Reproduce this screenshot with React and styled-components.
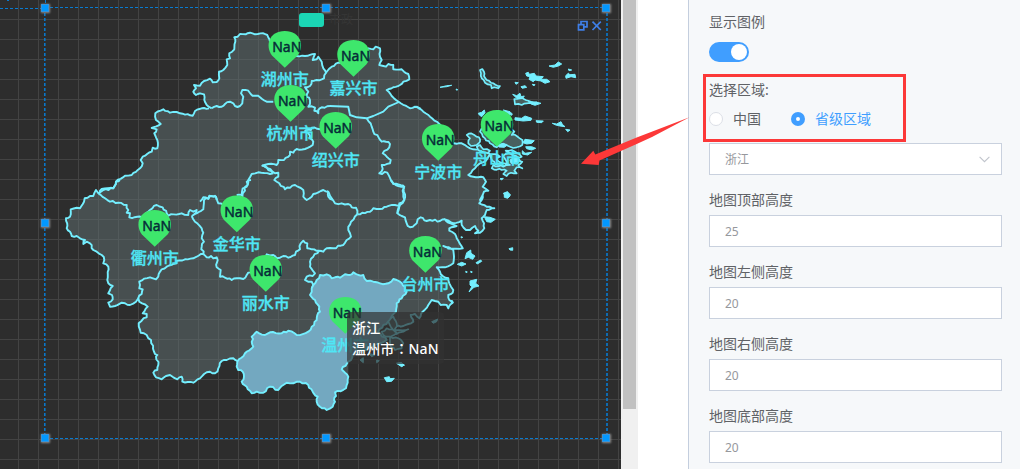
import React from "react";
import styled, { createGlobalStyle } from "styled-components";

const GlobalStyle = createGlobalStyle`
  * { box-sizing: border-box; }
  body {
    margin: 0;
    background: #fff;
    font-family: "Noto Sans", "Noto Sans CJK SC", sans-serif;
  }
`;

const Page = styled.div`
  position: relative;
  display: flex;
  width: 1020px;
  height: 469px;
  overflow: hidden;
  background: #fff;
`;

const Canvas = styled.main`
  position: relative;
  flex: 0 0 621px;
  overflow: hidden;
  background-color: #2d2d2d;
  background-image: linear-gradient(to right, #434343 1px, transparent 1px),
    linear-gradient(to bottom, #434343 1px, transparent 1px);
  background-size: 20px 20px;
  background-position: 18px 19px;
`;

const MapSvg = styled.svg`
  position: absolute;
  inset: 0;
  display: block;
`;

const Legend = styled.div`
  position: absolute;
  left: 299px;
  top: 13px;
  display: flex;
  align-items: center;
  gap: 5px;
  height: 14px;
  font-size: 12px;
  line-height: 14px;
  color: #353535;
`;

const Swatch = styled.span`
  width: 25px;
  height: 14px;
  border-radius: 3px;
  background: #1bd6b5;
`;

const Tooltip = styled.div`
  position: absolute;
  left: 347px;
  top: 312px;
  width: 97px;
  height: 52px;
  padding: 5px;
  border-radius: 4px;
  background: rgba(50, 50, 50, 0.7);
  color: #fff;
  font-size: 14px;
  font-weight: 500;
  letter-spacing: 0.15px;
  line-height: 21px;
  white-space: nowrap;
`;

const Colon = styled.span`
  font-family: "Noto Sans CJK TC", sans-serif;
`;

const Handle = styled.i`
  position: absolute;
  left: ${(p) => p.$x - 4}px;
  top: ${(p) => p.$y - 4}px;
  width: 8px;
  height: 8px;
  border: 0.5px solid #3a93d8;
  background: #0298ff;
  box-shadow: 0 0 2px 0.5px #8b8b8b;
`;

const Tools = styled.div`
  position: absolute;
  left: 577px;
  top: 15px;
`;

const ScrollTrack = styled.div`
  flex: 0 0 17px;
  padding: 0 2px;
  background: #f0f0f0;
`;

const ScrollThumb = styled.div`
  height: 409px;
  background: #c1c1c1;
`;

const Gutter = styled.div`
  flex: 0 0 50px;
`;

const Panel = styled.aside`
  flex: 1;
  display: flex;
  flex-direction: column;
  padding: 8px 18px 0 20px;
  border-left: 1px solid #c4cede;
  background: #f6f8fa;
`;

const Label = styled.div`
  flex: 0 0 28px;
  font-size: 14px;
  line-height: 28px;
  color: #606266;
`;

const Switch = styled.div`
  display: flex;
  justify-content: flex-end;
  width: 40px;
  height: 20px;
  margin: 6px 0 14px;
  padding: 2px;
  border-radius: 10px;
  background: #409eff;
`;

const Knob = styled.span`
  width: 16px;
  height: 16px;
  border-radius: 50%;
  background: #fff;
`;

const RadioRow = styled.div`
  display: flex;
  flex: 0 0 30px;
  gap: 30px;
  margin-bottom: 9px;
  align-items: center;
`;

const Radio = styled.label`
  display: flex;
  align-items: center;
  gap: 10px;
  font-size: 14px;
  line-height: 28px;
  color: ${(p) => (p.$on ? "#409eff" : "#606266")};
`;

const Dot = styled.span`
  width: 14px;
  height: 14px;
  border-radius: 50%;
  background: #fff;
  border: ${(p) => (p.$on ? "5px solid #409eff" : "1px solid #dcdfe6")};
`;

const Field = styled.div`
  display: flex;
  flex: 0 0 32px;
  align-items: center;
  justify-content: space-between;
  margin-bottom: 11px;
  padding: 0 11px 0 15px;
  border: 1px solid #c9d1de;
  background: #fff;
  color: #96989d;
  font-size: 12px;
`;

const FieldLabel = styled(Label)`
  flex: 0 0 29px;
`;

const Highlight = styled.div`
  position: absolute;
  left: 703px;
  top: 74px;
  width: 203px;
  height: 68px;
  border: 3px solid #fc3838;
`;

const Arrow = styled.svg`
  position: absolute;
  left: 580px;
  top: 115px;
`;

const hash = (n) => {
  const s = Math.sin(n * 12.9898) * 43758.5453;
  return s - Math.floor(s) - 0.5;
};

// Turns "x,y x,y" survey points (three units to a pixel) into pixel coordinates,
// breaking long segments into small uneven steps so that they read as natural edges.
const run = (ox, oy, pts, rough = 2) => {
  const list = pts
    .trim()
    .split(/\s+/)
    .map((p) => {
      const [x, y] = p.split(",").map(Number);
      return [ox + x / 3, oy + y / 3];
    });
  const out = [list[0]];
  for (let i = 1; i < list.length; i++) {
    const [x0, y0] = list[i - 1];
    const [x1, y1] = list[i];
    const len = Math.hypot(x1 - x0, y1 - y0);
    const n = rough ? Math.min(5, Math.round(len / 2.8)) : 1;
    for (let k = 1; k < n; k++) {
      const d = (hash(x0 + y0 * 3 + k * 7.3 + x1) * rough) / len;
      out.push([x0 + ((x1 - x0) * k) / n - (y1 - y0) * d, y0 + ((y1 - y0) * k) / n + (x1 - x0) * d]);
    }
    out.push([x1, y1]);
  }
  return out.map(([x, y]) => `${x.toFixed(1)} ${y.toFixed(1)}`).join("L");
};

const lakeside = run(180, 0, `95,325 80,315 73,300 72,283 60,280 48,285 40,275 48,265 42,255 60,257 72,243 90,236 98,247
110,246 118,235 117,215 130,210 142,195 140,178 150,175 148,160 163,148 166,125 163,112 173,110 180,102 197,103 210,98
225,103 250,100 262,105 270,125 290,165 350,168 375,168 405,162 398,180 410,178 415,170 425,185 430,205 438,218 455,200
475,188 490,190 540,165 565,145 580,148 587,140 600,145 600,170 605,180 598,195 610,198 618,200 625,192 640,195 640,208
665,208 672,215 685,222 688,238 670,245 660,255 640,262 620,270 635,288 657,306 690,325 705,320 720,325`, 1);
const bay = run(380, 0, `110,320 130,335 150,350 178,372 200,400 222,430 245,430 262,440 280,448 300,447 315,455 330,462
318,482 300,490 285,505 265,525 280,530 310,532 318,545 308,560 318,567 325,572 312,575 308,585 300,600`, 1);
const southCoast = run(390, 170, `278,75 275,90 268,100 290,110 313,115 290,120 285,135 275,145 282,160 283,175 270,188
255,190 265,182 255,168 240,180 228,180 215,165 215,152 190,160 165,148 175,158 200,168 178,175 178,182 195,192 200,205
218,235 190,236 160,228 190,240 192,260 190,280 165,292 140,292 150,305 158,318 175,325 178,340 183,350 190,360 188,368
175,375 178,390 188,398 175,415 170,405 152,405 145,395 125,390 115,405 98,425 88,445 75,432 62,435 70,455 40,468 10,468`, 1.4);
const wenzhou = run(220, 180, `275,325 280,315 290,300 300,285 320,283 335,295 345,292 360,293 375,283 390,285 400,277 415,285
430,285 440,303 460,305 480,310 505,310 520,297 530,300 540,305 555,320 560,335 545,355 530,370 528,395 510,420
490,435 475,455 500,480 475,490 430,510 405,520 385,545 365,568 375,578 385,590 378,625 345,637 348,648 342,660 345,665 338,680
320,690 300,680 290,665 293,650 278,635 265,615 240,605 220,610 200,608 190,615 175,630 150,620 130,638 110,635 95,640
80,620 65,605 72,590 68,575 55,570 50,560 52,545 75,520 100,500 95,470 110,455 135,465 150,457 185,460 205,452 230,465
265,455 275,440 290,420 292,405 300,395 298,380 285,360 270,345 275,325`);
const southWest = run(50, 180, `562,543 550,535 530,540 515,543 505,565 495,580 480,575 470,577 450,595 430,608 397,605
395,590 388,592 382,598 370,592 360,585 348,588 335,598 318,592 310,578 322,570 325,555 318,530 322,525 312,515 303,480 290,465
272,458 266,430 275,422 290,412 290,402 278,400 293,380 268,365 265,355 258,365 240,375 225,370 215,368 195,378 180,380
175,368 188,358 186,345 175,340 188,318 175,310 172,300 175,260 160,250 163,240 155,225 140,215 130,210 120,190 110,185 100,192
105,180 90,175 80,168 65,168 60,155 50,145 48,115 60,110 62,88 90,85 102,65 104,55 120,48 130,48 138,30 145,40 150,37`);
const northWest = run(0, 0, `300,572 305,567 340,565 348,545 375,527 395,525 420,505 428,490 422,480 428,470 455,455 458,443 472,445
472,420 463,400 470,388 455,384 482,372 468,360 466,340 490,328 510,338 530,336 540,340 578,347 585,333 605,325 627,325`, 1.4);

const province = `M${lakeside}L${bay}L${southCoast}L${run(220, 180, "490,435 475,455 500,480 430,510 385,545 365,568 385,590", 0)}L${run(220, 180, "385,520 52,545", 0)}L${southWest}L${northWest}Z`;
const outline = [
  `M${lakeside}L${bay}L${southCoast}`,
  `M${southWest}L${northWest}`,
];

const borders = [
  [180, 0, "95,325 110,318 125,320 135,312 150,305 160,310 165,318 180,318 187,310 190,290 183,280 187,270 205,272 212,282 225,287 240,292 260,305 280,305"],
  [180, 0, "438,218 432,235 410,240 395,243 390,258 375,262 385,275 380,290 390,300 390,312 385,320 405,323 403,332 415,340 415,330 425,322 450,318"],
  [180, 0, "450,318 505,320 510,345 530,352 560,355 580,348 610,335 625,320 657,306", 0],
  [180, 0, "420,388 395,383 393,390 375,393 385,400 390,415 400,425 398,435 375,447 350,447 340,458 330,455 330,465 312,480 295,480 290,495 265,492 247,497 260,502 265,510 280,520"],
  [180, 0, "280,520 270,522 235,517 215,522 205,540 203,555 193,563 195,572 188,580 186,600"],
  [180, 0, "60,605 70,592 85,597 90,588 108,590 110,600"],
  [180, 0, "247,495 285,520 295,518 295,530 283,540 298,550 315,568 345,555 370,570 370,590 380,600 395,590 400,582 415,577 430,570 445,575 445,590 458,600"],
  [220, 180, "320,33 335,55 345,70 365,70 385,72 395,82 408,83 412,103"],
  [180, 0, "560,355 575,380 580,395 605,425 618,425 630,432 628,442 608,460 620,470 632,480 630,490 605,495 608,507 598,520 622,518 640,550 655,558 673,560 673,600"],
  [220, 180, "513,0 520,12 550,17 550,40 553,60 540,75 535,85 532,100"],
  [390, 170, "42,90 28,100 28,110 22,130 35,138 45,142 50,160 60,172 80,160 83,148 92,142 110,153 120,150 150,153 165,148"],
  [220, 180, "412,103 450,95 460,85 480,87 500,80 525,75 540,75"],
  [220, 180, "297,212 310,215 320,205 340,205 370,195 380,180 393,170 390,160 385,150 393,125 412,103"],
  [220, 180, "297,212 280,230 270,245 270,260 285,280 278,288 260,290 255,300 275,305 280,315 275,325"],
  [220, 180, "130,240 140,223 160,225 170,235 180,233 190,228 205,233 225,225 228,215 240,208 242,190 250,182 262,190 262,205 275,208 297,212"],
  [50, 180, "460,222 470,232 483,228 490,235 500,232 503,240 500,262 512,270 510,290 525,293 545,300 560,295 580,297 590,285 610,270"],
  [50, 180, "460,222 440,230 430,235 405,238 380,242 380,250 350,260 335,268 325,290 318,298 300,292 268,305 268,325 278,328 275,342 265,355"],
  [50, 180, "425,108 435,125 455,145 460,158 455,175 462,185 455,200 460,222"],
  [50, 180, "145,40 165,55 180,65 205,68 230,75 235,90 230,98 240,100 238,112 262,110 275,112 300,90 320,75 338,82 350,100 355,107 395,100 415,105 420,90 430,95 440,90 438,98 425,108"],
  [50, 180, "432,102 460,88 462,60 475,55 478,47 490,50 495,47 505,70 520,75 560,75"],
  [50, 180, "145,40 160,30 190,25 198,5 210,0"],
  [50, 180, "560,45 575,45 578,25 590,20 590,5 603,0"],
].map(([x, y, pts, rough]) => `M${run(x, y, pts, rough)}`);

// Small islets are solid; the larger islands show their land inside the shoreline.
const islets = [
  [435, 50, "15,112 35,107 50,106 35,110"],
  [435, 50, "63,117 68,119 65,121"],
  [435, 50, "272,70 280,67 283,73 298,70 303,78 325,80 318,88 335,88 345,95 330,100 318,93 300,90 295,95 282,88 285,80 275,78"],
  [435, 50, "342,48 360,45 370,36 380,42 370,48 355,52"],
  [435, 50, "392,77 400,70 405,74 420,73 422,83 408,80 393,85"],
  [435, 50, "400,57 410,60 402,62"],
  [435, 50, "240,97 250,98 243,103"], [435, 50, "258,110 270,107 275,112 262,115"], [435, 50, "292,103 300,104 296,108"],
  [435, 50, "233,133 245,137 255,130 258,140 268,138 262,146 245,145"],
  [435, 50, "280,155 305,157 318,160 300,166 288,162"],
  [435, 50, "130,190 140,187 148,180 150,188 140,200 133,195"],
  [435, 50, "205,180 225,185 232,192 230,196 215,190"],
  [435, 50, "240,203 260,205 270,198 290,205 288,211 265,213 240,210"],
  [435, 50, "303,212 325,213 320,218 305,217"],
  [435, 50, "352,220 365,222 378,215 382,223 390,230 375,228 362,225"], [435, 50, "392,238 405,240 398,245"],
  [435, 50, "190,284 205,280 216,286 208,292 192,291"],
  [435, 50, "264,278 270,268 285,270 298,272 290,280 275,282"],
  [435, 50, "272,290 290,290 302,295 290,300 275,296"],
  [435, 50, "262,302 270,310 290,307 278,315 262,312"],
  [435, 50, "225,330 240,320 256,330 246,342 228,340"],
  [435, 50, "195,386 205,385 200,390"], [435, 50, "208,432 218,426 217,436 225,438 218,445 208,442"],
  [390, 170, "230,248 242,240 243,250 255,258 248,268 235,262 225,266"], [390, 170, "202,283 215,277 228,282 215,288"],
  [390, 170, "258,278 272,270 275,274 262,282"], [390, 170, "227,304 232,306 228,308"], [390, 170, "242,304 247,306 243,308"],
  [390, 170, "240,333 260,328 257,340 267,348 252,352 237,366 245,350 240,345"], [390, 170, "357,236 368,233 368,241 360,240"],
  [390, 170, "283,140 300,142 316,148 303,157 290,155"],
  [390, 170, "340,70 352,65 362,75 350,82"], [390, 170, "213,200 218,202 214,204"], [390, 170, "185,390 190,397 186,400"],
  [390, 170, "125,455 143,447 140,455 130,460"],
  [390, 170, "20,580 33,578 43,585 35,590"],
  [220, 180, "420,540 430,533 430,548"], [220, 180, "445,520 465,525 455,530"], [220, 180, "470,540 478,542 470,548"],
  [220, 180, "493,593 508,590 510,596 523,595 515,604 500,605"], [220, 180, "530,550 545,548 553,556 543,558"],
].map(([x, y, p]) => `M${run(x, y, p, 0)}Z`);

const islands = [
  [435, 50, "135,60 142,57 147,65 147,78 155,90 175,100 195,108 190,115 178,112 170,115 168,105 150,98 140,85 138,70"],
  [435, 50, "238,147 255,145 268,148 280,152 305,157 300,163 275,160 260,165 240,163"],
  [435, 50, "95,255 108,250 118,255 132,262 135,275 125,285 108,288 100,280 105,265"],
  [435, 50, "140,235 135,245 150,265 165,280 185,292 205,282 225,290 245,292 262,285 262,270 245,258 230,255 238,245 215,230"],
  [435, 50, "125,290 135,285 145,298 165,302 158,310 140,305 130,300"],
  [435, 50, "165,318 180,312 195,320 185,330 198,338 215,340 210,350 195,345 180,342 172,332"],
  [435, 50, "205,318 225,310 240,315 235,325 250,328 262,335 250,345 262,355 245,352 238,362 245,370 228,368 215,378 205,372 215,362 200,360 170,355 175,345 205,350 225,345 215,335"],
  [435, 50, "212,302 230,300 245,308 260,320 250,325 235,316"],
  [390, 170, "0,485 20,480 55,478 40,485 20,492 0,490"], [390, 170, "0,500 25,505 40,520 35,535 15,540 0,525"],
  [220, 180, "485,455 500,445 525,452 530,460 505,470 490,465"],
  [220, 180, "505,425 520,410 530,430 525,455 512,440"],
].map(([x, y, p]) => `M${run(x, y, p, 2)}Z`);

const cities = [
  ["湖州市", 284.8, 31], ["嘉兴市", 353.5, 40], ["杭州市", 290.5, 85], ["绍兴市", 335.7, 112],
  ["宁波市", 438.2, 124], ["舟山市", 497, 110], ["衢州市", 154.7, 210], ["金华市", 236.8, 195.5],
  ["丽水市", 265.8, 255], ["台州市", 425.4, 236], ["温州市", 345.3, 297],
];

const MapShape = styled.path`
  fill: ${(p) => p.$fill || "none"};
  stroke: ${(p) => (p.$bare ? "none" : "#74efff")};
  stroke-width: ${(p) => p.$w || 1.9}px;
  stroke-linejoin: round;
`;
const CityName = styled.text`
  fill: #4fe6f5;
  stroke: #4fe6f5;
  stroke-width: 0.3px;
  font-size: 16px;
  font-weight: 500;
  text-anchor: middle;
`;
const PinValue = styled.text`
  fill: #062c38;
  stroke: #062c38;
  stroke-width: 0.45px;
  font-size: 14px;
  text-anchor: middle;
`;
const FrameLine = styled.path`
  fill: none;
  stroke: #087bd0;
  stroke-width: ${(p) => p.$w || 1}px;
  stroke-dasharray: 3 2;
`;

const Pin = ({ x, top }) => (
  <path
    fill="#3ee76c"
    d={`M${x} ${top + 36.8}L${x - 12.8} ${top + 24.5}C${x - 20} ${top + 15} ${x - 16} ${top} ${x} ${top}C${x + 16} ${top} ${x + 20} ${top + 15} ${x + 12.8} ${top + 24.5}Z`}
  />
);

const ChartMap = () => (
  <MapSvg width="621" height="469">
    <MapShape $bare $fill="rgba(97,113,115,.5)" d={province} />
    {outline.concat(borders).map((d, i) => <MapShape key={i} d={d} />)}
    <MapShape $fill="#73a8c0" d={`M${wenzhou}Z`} />
    {islands.map((d, i) => <MapShape key={i} $w={1.7} $fill="#48605f" d={d} />)}
    {islets.map((d, i) => <MapShape key={i} $w={1} $fill="#74efff" d={d} />)}
    {cities.map(([name, x, top]) => (
      <g key={name}>
        <Pin x={x} top={top} />
        <CityName x={x} y={top + 54}>{name}</CityName>
        <PinValue x={x + 2} y={top + 21}>NaN</PinValue>
      </g>
    ))}
    <FrameLine d="M45 7.5H606" />
    <FrameLine d="M45 438.5H606" $w={1.2} />
    <FrameLine d="M44.8 8V438" $w={1.5} />
    <FrameLine d="M607 8V438" $w={1.6} />
    <FrameLine d="M0 8.5H44M45.5 0V6M7 .5h2" />
  </MapSvg>
);

const handles = [[45, 8], [326, 8], [606, 8], [45, 223], [606, 223], [45, 438], [326, 438], [606, 438]];

const fields = [["地图顶部高度", "25"], ["地图左侧高度", "20"], ["地图右侧高度", "20"], ["地图底部高度", "20"]];

export default function App() {
  return (
    <Page>
      <GlobalStyle />
      <Canvas>
        <ChartMap />
        <Legend><Swatch />市政</Legend>
        <Tooltip>浙江<br />温州市<Colon>：</Colon>NaN</Tooltip>
        {handles.map(([x, y]) => <Handle key={`${x}-${y}`} $x={x} $y={y} />)}
        <Tools>
          <svg width="26" height="12" fill="none" stroke="#3f7fe8" strokeWidth="1.7">
            <path d="M1.5 4.7h5.3v5.2H1.5zM4 4.5V1.5h6v5.3H7" />
            <path d="M15.5 1.7l8.3 8.3M23.8 1.7L15.5 10" />
          </svg>
        </Tools>
      </Canvas>
      <ScrollTrack><ScrollThumb /></ScrollTrack>
      <Gutter />
      <Panel>
        <Label>显示图例</Label>
        <Switch><Knob /></Switch>
        <Label>选择区域:</Label>
        <RadioRow>
          <Radio><Dot />中国</Radio>
          <Radio $on><Dot $on />省级区域</Radio>
        </RadioRow>
        <Field>
          浙江
          <svg width="11" height="7" fill="none" stroke="#c0c4cc" strokeWidth="1.1"><path d="M.6.8l4.9 4.9L10.4.8" /></svg>
        </Field>
        {fields.map(([label, value]) => (
          <React.Fragment key={label}>
            <FieldLabel>{label}</FieldLabel>
            <Field>{value}</Field>
          </React.Fragment>
        ))}
      </Panel>
      <Highlight />
      <Arrow width="112" height="54">
        <path fill="#fc3838" d="M1 48.7L13.3 35.7L15.3 39.5L56.7 22.5L109.5 2.3L72 22L56.7 29L19.5 45.5L18.7 50Z" />
      </Arrow>
    </Page>
  );
}
